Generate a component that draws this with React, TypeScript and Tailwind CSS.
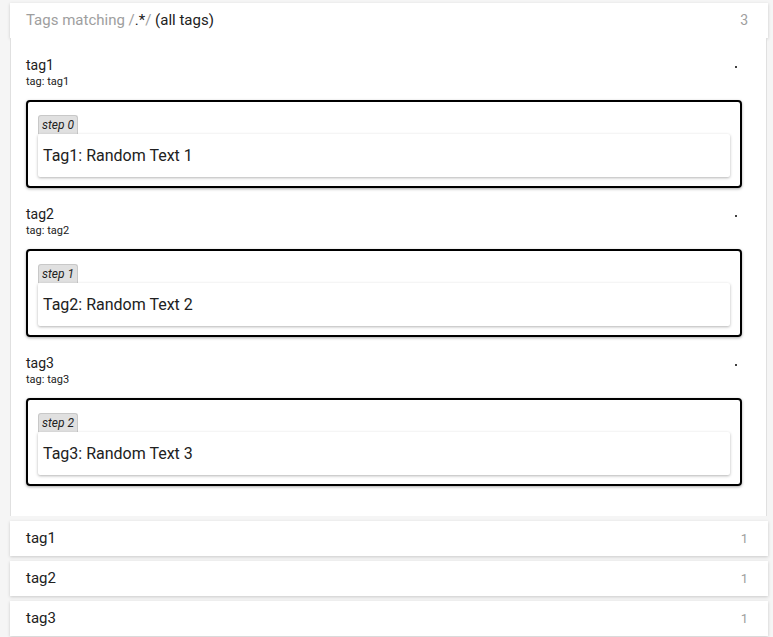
const items = [
  { name: "tag1", step: 0, text: "Tag1: Random Text 1" },
  { name: "tag2", step: 1, text: "Tag2: Random Text 2" },
  { name: "tag3", step: 2, text: "Tag3: Random Text 3" },
];

function TagItem({ name, step, text }: { name: string; step: number; text: string }) {
  return (
    <div>
      <div className="flex items-start justify-between">
        <div>
          <p className="text-[14px] leading-[18px] text-[#212121]">{name}</p>
          <p className="text-[11px] leading-[16px] text-[#212121]">tag: {name}</p>
        </div>
        <span className="mr-[5px] mt-[10px] h-[2px] w-[2px] rounded-full bg-black" />
      </div>
      <div className="mt-[10px] flex flex-col items-start rounded-[4px] border-2 border-black px-[10px] pb-[9px] pt-[13px] shadow-[0_1px_3px_rgba(0,0,0,0.35)]">
        <span className="block h-[19px] rounded-t-[3px] border border-b-0 border-[#c8c8c8] bg-[#e0e0e0] px-[3px] text-[12px] italic leading-[18px] text-[#222]">
          step {step}
        </span>
        <div className="flex h-[43px] w-full items-center rounded-[2px] bg-white pl-[5px] text-[16px] text-[#212121] shadow-[0_1px_3px_rgba(0,0,0,0.3)]">
          {text}
        </div>
      </div>
    </div>
  );
}

function CollapsedRow({ name, count }: { name: string; count: number }) {
  return (
    <div className="mt-[5px] flex h-[35px] items-center justify-between bg-white pl-4 pr-[20px] shadow-[0_1px_3px_rgba(0,0,0,0.18)]">
      <span className="text-[15px] text-[#212121]">{name}</span>
      <span className="text-[13px] text-[#9e9e9e]">{count}</span>
    </div>
  );
}

export default function App() {
  return (
    <div className="min-h-[637px] bg-[#f5f5f5] pl-[10px] pr-[5px] pt-[3px] font-['Roboto',sans-serif]">
      <div className="flex h-[35px] items-center justify-between bg-white pl-4 pr-[20px] shadow-[0_1px_3px_rgba(0,0,0,0.18)]">
        <span className="text-[15px]">
          <span className="text-[#9e9e9e]">Tags matching /</span>
          <span className="text-[#212121]">.*</span>
          <span className="text-[#9e9e9e]">/</span>
          <span className="text-[#212121]"> (all tags)</span>
        </span>
        <span className="text-[14px] text-[#9e9e9e]">3</span>
      </div>

      <div className="mr-[1px] flex flex-col gap-[17px] border-x border-[#e0e0e0] bg-white pb-[30px] pl-[15px] pr-6 pt-[18px]">
        {items.map((it) => (
          <TagItem key={it.name} {...it} />
        ))}
      </div>

      {items.map((it) => (
        <CollapsedRow key={it.name} name={it.name} count={1} />
      ))}
    </div>
  );
}
